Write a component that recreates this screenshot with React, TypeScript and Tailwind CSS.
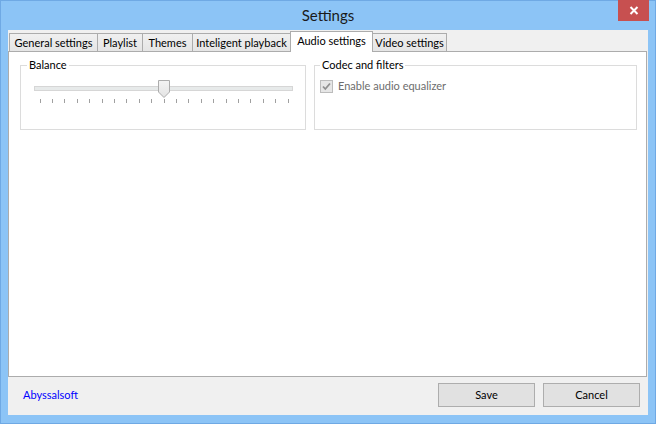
import React from 'react';

// Windows 8 style "Settings" dialog, Audio settings tab selected.
type Tab = { label: string; width: string; active?: boolean };

const tabs: Tab[] = [
  { label: 'General settings', width: 'w-[89px]' },
  { label: 'Playlist', width: 'w-[46px]' },
  { label: 'Themes', width: 'w-[51px]' },
  { label: 'Inteligent playback', width: 'w-[99px]' },
  { label: 'Audio settings', width: 'w-[83px]', active: true },
  { label: 'Video settings', width: 'w-[75px]' },
];

const TICKS = Array.from({ length: 21 }, (_, i) => 6.5 + i * 12.4);

const CloseGlyph: React.FC = () => (
  <svg width="10" height="9" viewBox="0 0 10 9">
    <path d="M1.5 1 L8.5 8 M8.5 1 L1.5 8" stroke="#ffffff" strokeWidth="2" />
  </svg>
);

const BalanceSlider: React.FC = () => (
  <svg width="262" height="26" viewBox="0 0 262 26" className="ml-[12px] mt-[13px] block">
    <rect x="1.5" y="7.5" width="258" height="4" fill="#e7eaea" stroke="#d6d6d6" />
    {TICKS.map((x) => (
      <line key={x} x1={Math.round(x) + 0.5} x2={Math.round(x) + 0.5} y1="20" y2="24" stroke="#a0a0a0" />
    ))}
    <defs>
      <linearGradient id="thumb" x1="0" y1="0" x2="0" y2="1">
        <stop offset="0" stopColor="#f3f3f3" />
        <stop offset="1" stopColor="#e3e3e3" />
      </linearGradient>
    </defs>
    <path d="M125.5 1.5 H136.5 V13 L131 18.5 L125.5 13 Z" fill="url(#thumb)" stroke="#acacac" />
  </svg>
);

const DisabledCheck: React.FC = () => (
  <svg width="13" height="13" viewBox="0 0 13 13" className="shrink-0">
    <rect x="0.5" y="0.5" width="12" height="12" fill="#e6e6e6" stroke="#bcbcbc" />
    <path d="M3 6.5 L5.3 9 L10 3.5" fill="none" stroke="#8f8f8f" strokeWidth="1.8" />
  </svg>
);

export default function App() {
  return (
    <div className="w-[656px] h-[424px] bg-[#8cc4f6] border border-[#6fa9e4] flex flex-col font-['Lato','Liberation_Sans',sans-serif] text-[11px] text-black whitespace-nowrap select-none">
      {/* title bar */}
      <div className="grid grid-cols-[1fr_auto_1fr] items-center h-[29px] shrink-0">
        <div />
        <div className="text-[15px] leading-[20px] text-[#1a1a1a] pb-[1px]">Settings</div>
        <div className="flex justify-end self-start mr-[6px] -mt-px">
          <button className="w-[31px] h-[21px] bg-[#c75050] flex items-center justify-center">
            <CloseGlyph />
          </button>
        </div>
      </div>

      {/* client area */}
      <div className="mx-[7px] h-[385px] bg-[#f0f0f0] flex flex-col">
        <div className="flex flex-col h-[347px]">
          <div className="flex items-end h-[21px] pl-px">
            {tabs.map((tab) =>
              tab.active ? (
                <div
                  key={tab.label}
                  className={`${tab.width} -ml-px h-[21px] -mb-px relative z-10 bg-white border border-b-0 border-[#acacac] flex items-start justify-center pt-[2px] leading-[14px]`}
                >
                  {tab.label}
                </div>
              ) : (
                <div
                  key={tab.label}
                  className={`${tab.width} first:ml-0 -ml-px h-[18px] bg-gradient-to-b from-[#f0f0f0] to-[#e5e5e5] border border-b-0 border-[#acacac] flex items-center justify-center leading-[14px]`}
                >
                  {tab.label}
                </div>
              ),
            )}
          </div>

          <div className="flex-1 w-[639px] bg-white border border-[#acacac] flex items-start gap-[8px] pl-[11px] pt-[13px]">
            {/* Balance group */}
            <div className="relative w-[286px] h-[65px] border border-[#dcdcdc]">
              <span className="absolute left-[6px] top-[-8px] bg-white px-[2px] leading-[14px]">Balance</span>
              <BalanceSlider />
            </div>

            {/* Codec and filters group */}
            <div className="relative w-[323px] h-[65px] border border-[#dcdcdc]">
              <span className="absolute left-[5px] top-[-8px] bg-white px-[2px] leading-[14px]">Codec and filters</span>
              <label className="flex items-center gap-[5px] ml-[5px] mt-[13px] text-[#6d6d6d] leading-[14px]">
                <DisabledCheck />
                Enable audio equalizer
              </label>
            </div>
          </div>
        </div>

        {/* footer */}
        <div className="flex items-center h-[38px] pb-[8px] pt-[6px] pr-[8px]">
          <a className="pl-[15px] text-[#0000ff] leading-[14px]">Abyssalsoft</a>
          <div className="ml-auto flex gap-[8px]">
            <button className="w-[97px] h-[24px] bg-[#e1e1e1] border border-[#adadad] leading-[14px]">Save</button>
            <button className="w-[97px] h-[24px] bg-[#e1e1e1] border border-[#adadad] leading-[14px]">Cancel</button>
          </div>
        </div>
      </div>
    </div>
  );
}
